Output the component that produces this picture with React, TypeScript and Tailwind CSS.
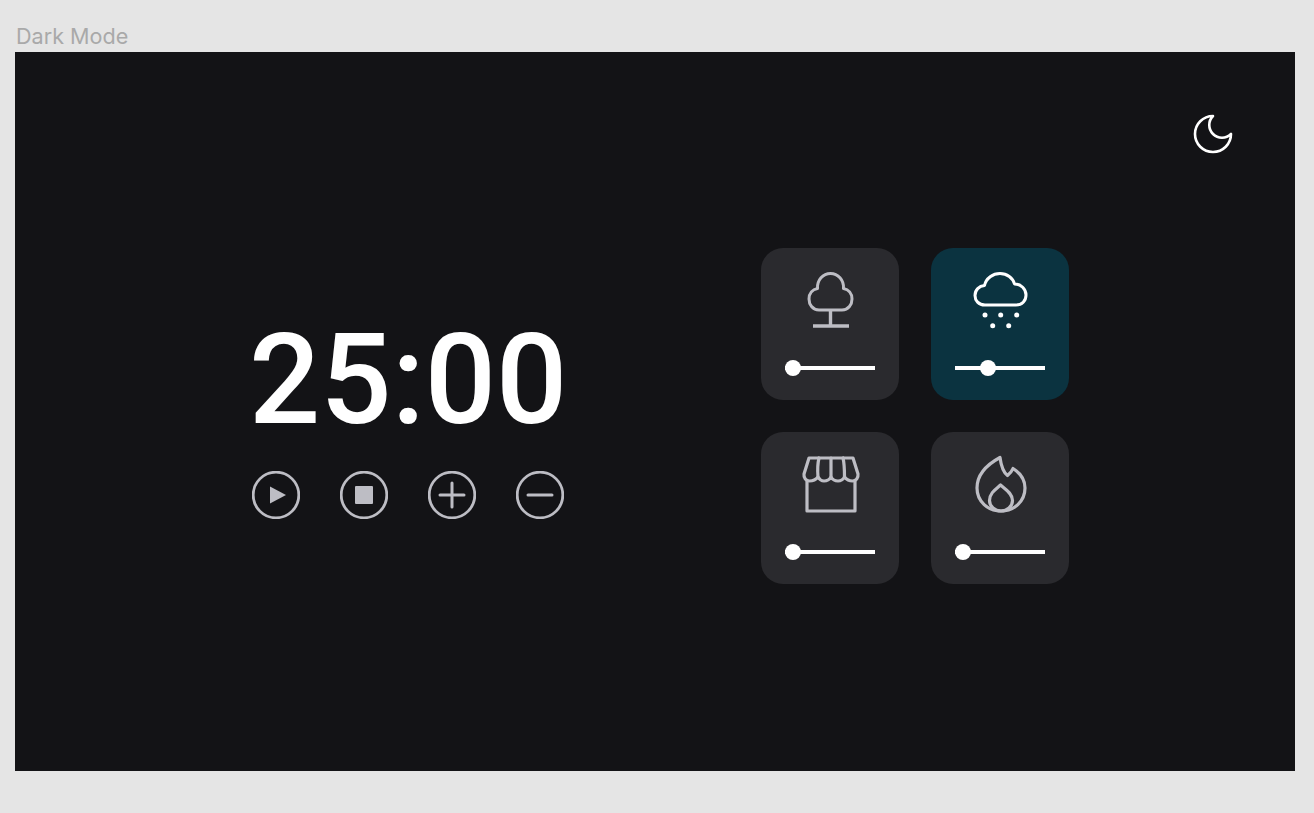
import React from "react";

const Tree = () => (
  <svg viewBox="0 0 64 64" className="w-16 h-16" fill="none" stroke="#bdbdc4" strokeWidth="3" strokeLinejoin="round">
    <path d="M21 42C14.5 42 11 36.5 11 31C11 25.5 14.5 21.5 19.5 20.5C19 12 25 5.5 32.5 5.5C40 5.5 46 12 45.5 20.5C50.5 21.5 54 25.5 54 31C54 36.5 50.5 42 44 42Z" />
    <path d="M32.5 42V58M15 58H51" strokeWidth="3.4" />
  </svg>
);

const Cloud = () => (
  <svg viewBox="0 0 64 64" className="w-16 h-16" fill="none" stroke="#ffffff" strokeWidth="3" strokeLinejoin="round">
    <path d="M17 37C10.5 37 7 32.5 7 27.5C7 22 11 18 16.5 17.5C18 10 25 5.5 32 5.5C39 5.5 45 10 46.5 16C53 16 58 21 58 27C58 33 54 37 48 37Z" />
    <g fill="#ffffff" stroke="none">
      <circle cx="17" cy="47" r="2.5" />
      <circle cx="32.7" cy="47" r="2.5" />
      <circle cx="48.7" cy="47" r="2.5" />
      <circle cx="24.7" cy="57.7" r="2.5" />
      <circle cx="40.7" cy="57.7" r="2.5" />
    </g>
  </svg>
);

const Store = () => (
  <svg viewBox="0 0 64 64" className="w-16 h-16" fill="none" stroke="#bdbdc4" strokeWidth="3.2" strokeLinejoin="round" strokeLinecap="round">
    <path d="M9 29V59H57V29" />
    <path d="M11 6H55L60 22C60.5 26 58 29 54.5 29C51 29 48.5 27.5 46.5 25C45 27.5 43 29 40 29C37 29 34.5 27.5 33 25C31.5 27.5 29 29 26 29C23 29 21.5 27.5 20 25C18 27.5 15 29 11.5 29C8 29 5.5 26 6 22Z" />
    <path d="M21 6C19.5 12 19.5 19 20 25M33 6V25M45 6C46.5 12 46.5 19 46.5 25" />
  </svg>
);

const Flame = () => (
  <svg viewBox="0 0 64 64" className="w-16 h-16" fill="none" stroke="#bdbdc4" strokeWidth="3.2" strokeLinejoin="round">
    <path d="M32 5.5C33 13 35 20 39.5 23.5C42 21.5 44 19 45 16.5C52 21 57 28 57 36C57 49.5 46 59 33 59C20 59 9 49.5 9 36C9 22 20 12 32 5.5Z" />
    <path d="M32.5 33C28 37 21.5 41 21.5 48.5C21.5 54.5 27 59 33 59C39 59 44.5 54.5 44.5 48.5C44.5 41 37 37 32.5 33Z" />
  </svg>
);

const cardData = [
  { icon: <Tree />, active: false, thumb: 0 },
  { icon: <Cloud />, active: true, thumb: 25 },
  { icon: <Store />, active: false, thumb: 0 },
  { icon: <Flame />, active: false, thumb: 0 },
];

const Slider = ({ thumb }: { thumb: number }) => (
  <div className="relative flex items-center w-[90px] h-4">
    <div className="w-full h-[4px] bg-white" />
    <div className="absolute w-4 h-4 rounded-full bg-white" style={{ left: thumb }} />
  </div>
);

const Circle = ({ children }: { children: React.ReactNode }) => (
  <svg viewBox="0 0 48 48" className="w-12 h-12" fill="none" stroke="#bdbdc4" strokeWidth="2.8">
    <circle cx="24" cy="24" r="22.8" />
    {children}
  </svg>
);

export default function App() {
  return (
    <div className="h-[813px] w-full bg-[#e5e5e5] overflow-hidden" style={{ fontFamily: "Roboto, sans-serif" }}>
      <div className="pl-[16px] pt-[22px] h-[52px] text-[21.6px] leading-[28px] text-[#a9a9a9]" style={{ fontFamily: "Inter, sans-serif" }}>
        Dark Mode
      </div>
      <div className="ml-[15px] w-[1280px] h-[719px] bg-[#131316] flex flex-col">
        <div className="flex justify-end pt-[58px] pr-[58px]">
          <svg viewBox="0 0 24 24" className="w-12 h-12" fill="none" stroke="#ffffff" strokeWidth="1.3" strokeLinejoin="round">
            <path d="M12 3a6 6 0 0 0 9 9 9 9 0 1 1-9-9Z" />
          </svg>
        </div>
        <div className="flex items-center mt-[90px] pl-[237px]">
          <div className="w-[509px] flex flex-col">
            <div className="text-[125.5px] leading-[146px] font-medium text-white -ml-[3px] mt-[-5px]">25:00</div>
            <div className="flex gap-10 mt-[17px]">
              <Circle><path d="M18 15.5L34 24L18 32.5Z" fill="#bdbdc4" stroke="none" /></Circle>
              <Circle><rect x="15" y="15" width="18" height="18" rx="1" fill="#bdbdc4" stroke="none" /></Circle>
              <Circle><path d="M12 24H36M24 12V36" strokeLinecap="round" strokeWidth="3" /></Circle>
              <Circle><path d="M12 24H36" strokeLinecap="round" strokeWidth="3" /></Circle>
            </div>
          </div>
          <div className="grid grid-cols-[138px_138px] gap-8">
            {cardData.map((c, i) => (
              <div key={i} className={`h-[152px] rounded-[22px] flex flex-col items-center pt-5 ${c.active ? "bg-[#0b3340]" : "bg-[#2a2a2e]"}`}>
                {c.icon}
                <div className="mt-7"><Slider thumb={c.thumb} /></div>
              </div>
            ))}
          </div>
        </div>
      </div>
    </div>
  );
}
